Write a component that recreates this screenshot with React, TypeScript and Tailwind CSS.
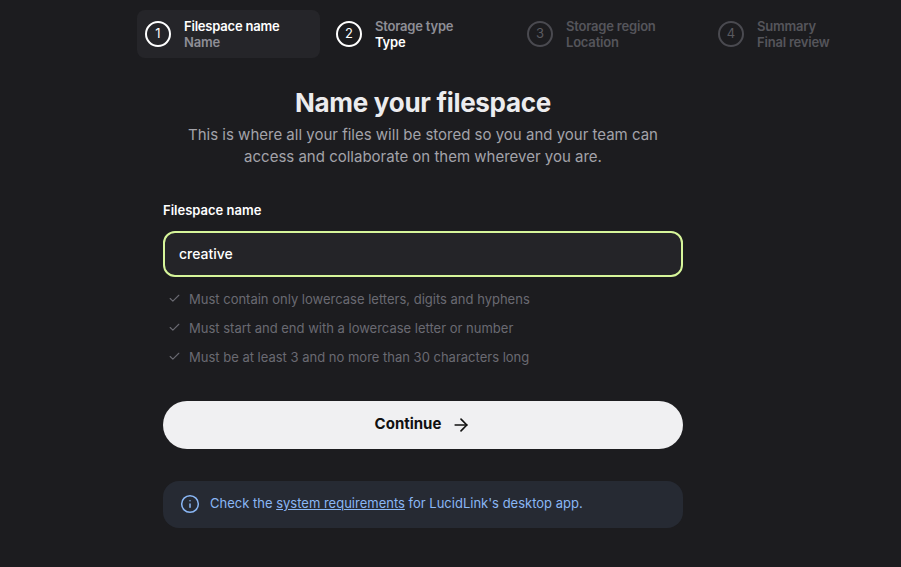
import { Check, ArrowRight, Info } from 'lucide-react';

const steps = [
  { n: 1, title: 'Filespace name', sub: 'Name', state: 'active' },
  { n: 2, title: 'Storage type', sub: 'Type', state: 'next' },
  { n: 3, title: 'Storage region', sub: 'Location', state: 'off' },
  { n: 4, title: 'Summary', sub: 'Final review', state: 'off' },
];

const rules = [
  'Must contain only lowercase letters, digits and hyphens',
  'Must start and end with a lowercase letter or number',
  'Must be at least 3 and no more than 30 characters long',
];

export default function App() {
  return (
    <div className="min-h-[567px] bg-[#1c1c1f] font-[Inter] text-white">
      <div className="flex pl-[137px] pt-[10px]">
        {steps.map((s) => (
          <div key={s.n} className={`mr-[8px] flex h-[48px] w-[184px] items-center gap-[13px] rounded-lg px-[8px] ${s.state === 'active' ? 'bg-[#252529]' : ''}`}>
            <div className={`flex h-[26px] w-[26px] shrink-0 items-center justify-center rounded-full border-2 text-[13px] ${s.state === 'off' ? 'border-[#4a4a50] text-[#5a5a60]' : 'border-white text-white'}`}>{s.n}</div>
            <div className="text-[13px] font-semibold leading-[16px] tracking-[-0.2px]">
              <div className={s.state === 'active' ? 'text-white' : s.state === 'next' ? 'text-[#8e8e96]' : 'text-[#55555b]'}>{s.title}</div>
              <div className={s.state === 'active' ? 'text-[#8e8e96]' : s.state === 'next' ? 'text-white' : 'text-[#55555b]'}>{s.sub}</div>
            </div>
          </div>
        ))}
      </div>
      <div className="ml-[163px] mt-[29px] w-[520px]">
        <h1 className="text-center text-[26px] font-bold leading-[32px] tracking-[-0.3px] text-[#ececee]">Name your filespace</h1>
        <p className="mx-auto mt-[5px] w-[490px] text-center text-[15px] leading-[22px] text-[#a3a3aa]">This is where all your files will be stored so you and your team can access and collaborate on them wherever you are.</p>
        <div className="mt-[33px] text-[13px] font-semibold text-white">Filespace name</div>
        <div className="mt-[10px] flex h-[46px] items-center rounded-xl border-2 border-[#d6f59a] bg-[#242428] px-[14px] text-[14px] font-medium">creative</div>
        <div className="mt-[13px] flex flex-col gap-[11px] pl-[5px]">
          {rules.map((r) => (
            <div key={r} className="flex items-center gap-[8px] text-[13px] leading-[18px] text-[#6a6a72]">
              <Check size={13} strokeWidth={2} />
              <span>{r}</span>
            </div>
          ))}
        </div>
        <button className="mt-[35px] flex h-[48px] w-full items-center justify-center gap-[10px] rounded-full bg-[#f0f0f2] text-[15px] font-bold text-[#111]">
          Continue <ArrowRight size={20} strokeWidth={2} />
        </button>
        <div className="mt-[32px] flex h-[47px] items-center gap-[10px] rounded-2xl bg-[#262a33] px-[17px] text-[13px] text-[#8ab7f5]">
          <Info size={20} strokeWidth={1.8} />
          <span>Check the <span className="underline">system requirements</span> for LucidLink's desktop app.</span>
        </div>
      </div>
    </div>
  );
}
